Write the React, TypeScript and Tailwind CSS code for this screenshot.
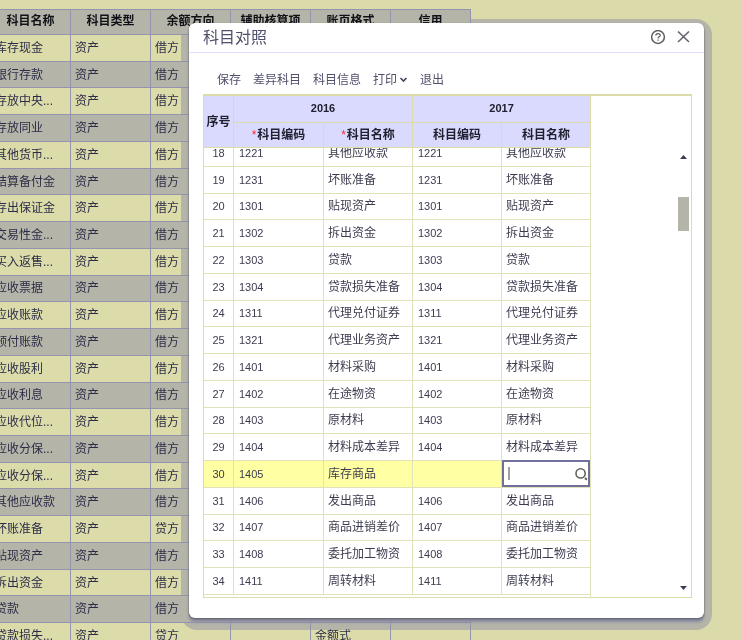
import React from "react";

const accounts = [
  ["库存现金", "借方"],
  ["银行存款", "借方"],
  ["存放中央...", "借方"],
  ["存放同业", "借方"],
  ["其他货币...", "借方"],
  ["结算备付金", "借方"],
  ["存出保证金", "借方"],
  ["交易性金...", "借方"],
  ["买入返售...", "借方"],
  ["应收票据", "借方"],
  ["应收账款", "借方"],
  ["预付账款", "借方"],
  ["应收股利", "借方"],
  ["应收利息", "借方"],
  ["应收代位...", "借方"],
  ["应收分保...", "借方"],
  ["应收分保...", "借方"],
  ["其他应收款", "借方"],
  ["坏账准备", "贷方"],
  ["贴现资产", "借方"],
  ["拆出资金", "借方"],
  ["贷款", "借方"],
  ["贷款损失...", "贷方"],
];

const subjects = [
  [18, "1221", "其他应收款"],
  [19, "1231", "坏账准备"],
  [20, "1301", "贴现资产"],
  [21, "1302", "拆出资金"],
  [22, "1303", "贷款"],
  [23, "1304", "贷款损失准备"],
  [24, "1311", "代理兑付证券"],
  [25, "1321", "代理业务资产"],
  [26, "1401", "材料采购"],
  [27, "1402", "在途物资"],
  [28, "1403", "原材料"],
  [29, "1404", "材料成本差异"],
  [30, "1405", "库存商品"],
  [31, "1406", "发出商品"],
  [32, "1407", "商品进销差价"],
  [33, "1408", "委托加工物资"],
  [34, "1411", "周转材料"],
];

const editing = 30;

const AccountTable = () => {
  const headers = ["科目名称", "科目类型", "余额方向", "辅助核算项", "账页格式", "信用"];
  return (
    <table className="-ml-[10px] h-[641px] w-[481px] table-fixed border-collapse text-xs leading-4 text-[#2c2c48]">
      <thead>
        <tr className="h-[25px] bg-[#b4b4a8] text-[#101018]">
          {headers.map((h) => (
            <th key={h} className="border border-[#9494ae] p-0 pb-[2px] font-bold">
              {h}
            </th>
          ))}
        </tr>
      </thead>
      <tbody>
        {accounts.map(([name, side], i) => (
          <tr key={i} className={i % 2 ? "bg-[#b4b4a8]" : "bg-[#dcdcaa]"}>
            <td className="whitespace-nowrap border border-[#9494ae] p-0 pl-1">{name}</td>
            <td className="border border-[#9494ae] p-0 pl-1">资产</td>
            <td className="border border-[#9494ae] p-0 pl-1">{side}</td>
            <td className="border border-[#9494ae] p-0"></td>
            <td className="border border-[#9494ae] p-0 pl-1">
              {i === accounts.length - 1 && "金额式"}
            </td>
            <td className="border border-[#9494ae] p-0"></td>
          </tr>
        ))}
      </tbody>
    </table>
  );
};

const Columns = () => (
  <colgroup>
    <col className="w-[30px]" />
    <col className="w-[90px]" />
    <col className="w-[89px]" />
    <col className="w-[89px]" />
    <col className="w-[89px]" />
  </colgroup>
);

const NameEditor = () => (
  <div className="absolute -top-px bottom-0 left-0 right-0 flex items-center border-2 border-[#70709c] bg-white">
    <input
      type="text"
      aria-label="2017 科目名称"
      className="h-full w-full min-w-0 bg-transparent pl-1 outline-none"
    />
    <span className="absolute left-1 h-[13px] w-[2px] bg-[#a0a0a0]" />
    <button type="button" aria-label="查找" className="absolute right-0">
      <svg width="15" height="15" viewBox="0 0 15 15" fill="none" stroke="#62625a">
        <circle cx="7.6" cy="7.4" r="4.6" strokeWidth="1.6" />
        <path d="M12 12 L13.8 13.8" strokeWidth="2" />
      </svg>
    </button>
  </div>
);

const SubjectGrid = () => (
  <div className="flex border border-t-2 border-[#dcdcaa] text-xs leading-4 text-[#3c3c50]">
    <div>
      <table className="w-[387px] table-fixed border-separate border-spacing-0 bg-[#dadaff] text-[#202030]">
        <Columns />
        <thead>
          <tr className="h-[27px]">
            <th rowSpan={2} className="border-b border-r border-[#dcdcaa] p-0">序号</th>
            <th colSpan={2} className="border-b border-r border-[#dcdcaa] p-0 pb-[2px] text-[11px]">2016</th>
            <th colSpan={2} className="border-b border-r border-[#dcdcaa] p-0 pb-[2px] text-[11px]">2017</th>
          </tr>
          <tr className="h-[25px]">
            <th className="border-b border-r border-[#dcdcaa] p-0">
              <span className="mr-px font-normal text-red-500">*</span>科目编码
            </th>
            <th className="border-b border-r border-[#dcdcaa] p-0">
              <span className="mr-px font-normal text-red-500">*</span>科目名称
            </th>
            <th className="border-b border-r border-[#dcdcaa] p-0">科目编码</th>
            <th className="border-b border-r border-[#dcdcaa] p-0">科目名称</th>
          </tr>
        </thead>
      </table>
      {/* scrolled part way into row 18 */}
      <div className="h-[449px] overflow-hidden">
        <table className="-mt-2 h-[455px] w-[387px] table-fixed border-separate border-spacing-0">
          <Columns />
          <tbody>
            {subjects.map(([no, code, name]) => (
              <tr key={no} className={no === editing ? "bg-[#ffffa4]" : "bg-white"}>
                <td className="border-b border-r border-[#e2e2b8] p-0 text-center text-[11px]">{no}</td>
                <td className="border-b border-r border-[#e2e2b8] p-0 pl-[5px] text-[11px]">{code}</td>
                <td className="whitespace-nowrap border-b border-r border-[#e2e2b8] p-0 pl-1">{name}</td>
                <td className="border-b border-r border-[#e2e2b8] p-0 pl-[5px] text-[11px]">
                  {no === editing ? "" : code}
                </td>
                <td className="relative whitespace-nowrap border-b border-r border-[#e2e2b8] p-0 pl-1">
                  {no === editing ? <NameEditor /> : name}
                </td>
              </tr>
            ))}
          </tbody>
        </table>
        <div className="h-[2px] w-[387px] border-r border-[#e2e2b8]" />
      </div>
    </div>
    <div className="ml-auto mr-[2px] flex w-[11px] flex-col items-center pb-[6px] pt-[58px]">
      <svg width="7" height="5" viewBox="0 0 7 5" fill="#3c3c58">
        <path d="M0 5 L3.5 1 L7 5Z" />
      </svg>
      <div className="mt-[38px] h-[34px] w-full bg-[#b4b4a8]" />
      <svg className="mt-auto" width="7" height="5" viewBox="0 0 7 5" fill="#3c3c58">
        <path d="M0 0 L3.5 4 L7 0Z" />
      </svg>
    </div>
  </div>
);

const CompareDialog = () => (
  <div className="relative">
    <div className="absolute -inset-x-2 -bottom-3 -top-1 rounded-2xl bg-[#b4b4a8] mix-blend-darken" />
    <section
      role="dialog"
      aria-labelledby="dialog-title"
      className="relative rounded-[6px] bg-white pb-5 text-[#50506c] shadow-[0_1px_2px_#606060,0_4px_3px_#8888a4]"
    >
      <header className="flex h-[30px] items-center border-b border-[#dedeff] pl-[14px] pr-[14px]">
        <h1 id="dialog-title" className="text-base leading-5">科目对照</h1>
        <button type="button" aria-label="帮助" className="ml-auto">
          <svg width="16" height="16" viewBox="0 0 16 16" fill="none" stroke="#5c5c58">
            <circle cx="8" cy="7" r="6.4" strokeWidth="1.5" />
            <path d="M5.8 5.6 C5.8 2.9 10.2 2.9 10.2 5.4 C10.2 6.8 8 6.9 8 8.4 M8 9.6 V10.8" strokeWidth="1.2" />
          </svg>
        </button>
        <button type="button" aria-label="关闭" className="ml-[11px]">
          <svg width="13" height="13" viewBox="0 0 13 13" fill="none" stroke="#66666e" strokeWidth="1.6">
            <path d="M1 0.5 L12 11 M12 0.5 L1 11" />
          </svg>
        </button>
      </header>
      <div className="flex gap-3 pb-[6px] pl-7 pt-[19px] text-xs leading-4">
        <button type="button">保存</button>
        <button type="button">差异科目</button>
        <button type="button">科目信息</button>
        <button type="button" className="flex items-center gap-[2px]">
          打印
          <svg width="9" height="6" viewBox="0 0 9 6" fill="none" stroke="#44445c" strokeWidth="1.6">
            <path d="M1.5 1 L4.5 4 L7.5 1" />
          </svg>
        </button>
        <button type="button">退出</button>
      </div>
      <div className="pl-[14px] pr-3">
        <SubjectGrid />
      </div>
    </section>
  </div>
);

export default function App() {
  return (
    <main className="relative h-screen overflow-hidden bg-[#dadaaa] pt-[9px] font-['Liberation_Sans','Noto_Sans_CJK_SC',sans-serif]">
      <AccountTable />
      <div className="absolute inset-x-0 top-0 pl-[189px] pr-[38px] pt-[23px]">
        <CompareDialog />
      </div>
    </main>
  );
}
